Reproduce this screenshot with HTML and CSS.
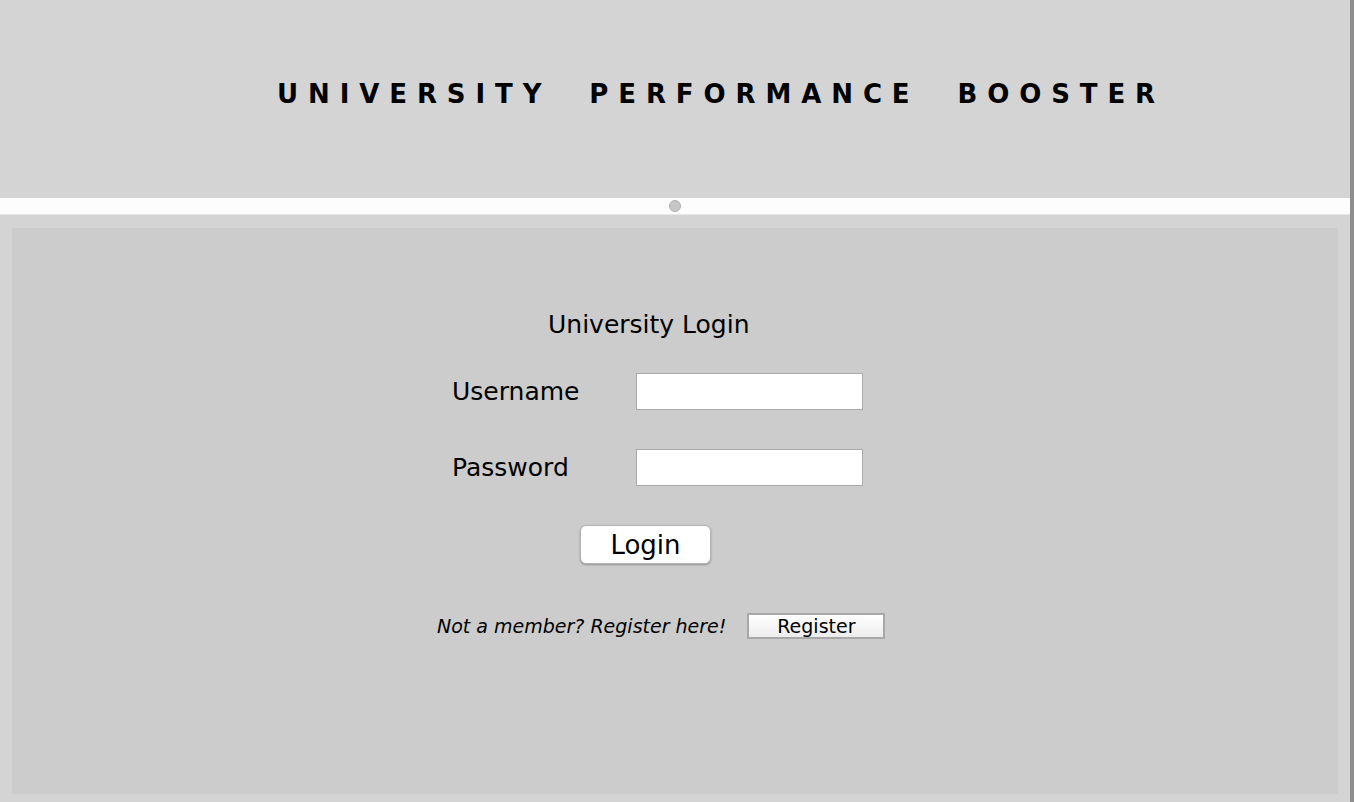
FILE: index.html
```html
<!DOCTYPE html>
<html lang="en">
<head>
  <meta charset="UTF-8" />
  <title>University Performance Booster</title>
  <link rel="stylesheet" href="styles.css">
</head>
<body>
  <div class="frame">
    <header class="banner">
      <h1>UNIVERSITY&nbsp;&nbsp;PERFORMANCE&nbsp;&nbsp;BOOSTER</h1>
    </header>
    <div class="divider"><span class="knob"></span></div>
    <main class="panel">
      <h2 class="login-title">University Login</h2>
      <form class="login-form" onsubmit="return false">
        <div class="field">
          <label for="username">Username</label>
          <input type="text" id="username" />
        </div>
        <div class="field">
          <label for="password">Password</label>
          <input type="password" id="password" />
        </div>
        <button class="btn-login" type="submit">Login</button>
      </form>
      <div class="register-row">
        <em>Not a member? Register here!</em>
        <button class="btn-register" type="button">Register</button>
      </div>
    </main>
  </div>
</body>
</html>
```

FILE: styles.css
```css
* { margin: 0; padding: 0; box-sizing: border-box; font-family: 'DejaVu Sans', 'Verdana', sans-serif; }
body {
  background: #8e8e8e;
  color: #000;
  width: 1354px;
  height: 802px;
  overflow: hidden;
}
.frame {
  width: 1350px;
  height: 802px;
  background: #d4d4d4;
  display: flex;
  flex-direction: column;
}
.banner {
  height: 198px;
  padding: 78px 0 0 277px;
}
h1 {
  font-size: 26px;
  font-weight: 700;
  letter-spacing: 9.9px;
  line-height: 32px;
  white-space: nowrap;
}
.divider {
  height: 17px;
  background: #fdfdfd;
  border-bottom: 1px solid #e6e6e6;
  display: flex;
  justify-content: center;
  align-items: center;
}
.knob {
  width: 12px;
  height: 12px;
  border-radius: 50%;
  background: #c6c6c6;
  border: 1px solid #b0b0b0;
}
.panel {
  flex: 1;
  margin: 13px 12px 8px 12px;
  background: #cccccc;
  display: flex;
  flex-direction: column;
  align-items: flex-start;
  padding-top: 82px;
}
.login-title {
  font-size: 25px;
  font-weight: 400;
  line-height: 30px;
  margin-left: 536px;
}
.login-form {
  display: flex;
  flex-direction: column;
  align-items: flex-start;
}
.field {
  display: flex;
  align-items: center;
  margin-left: 440px;
  margin-top: 33px;
}
.field + .field { margin-top: 39px; }
.field label {
  width: 184px;
  font-size: 25px;
  line-height: 30px;
}
.field input {
  width: 227px;
  height: 37px;
  background: #fff;
  border: 1px solid #a9a9a9;
  font-size: 16px;
  padding: 0 4px;
}
.field input:focus { outline: none; }
.btn-login {
  margin: 39px 0 0 568px;
  width: 131px;
  height: 39px;
  background: #fff;
  border: 1px solid #b4b4b4;
  border-radius: 6px;
  box-shadow: 0 1px 2px rgba(0, 0, 0, 0.3);
  font-size: 26px;
  line-height: 30px;
  color: #000;
}
.register-row {
  display: flex;
  align-items: center;
  margin: 49px 0 0 425px;
}
.register-row em {
  font-size: 19px;
  line-height: 24px;
  font-style: italic;
}
.btn-register {
  margin-left: 21px;
  width: 138px;
  height: 26px;
  background: linear-gradient(#ffffff, #ececec);
  border: 2px solid #a8a8a8;
  font-size: 19px;
  line-height: 22px;
  color: #000;
}
```
